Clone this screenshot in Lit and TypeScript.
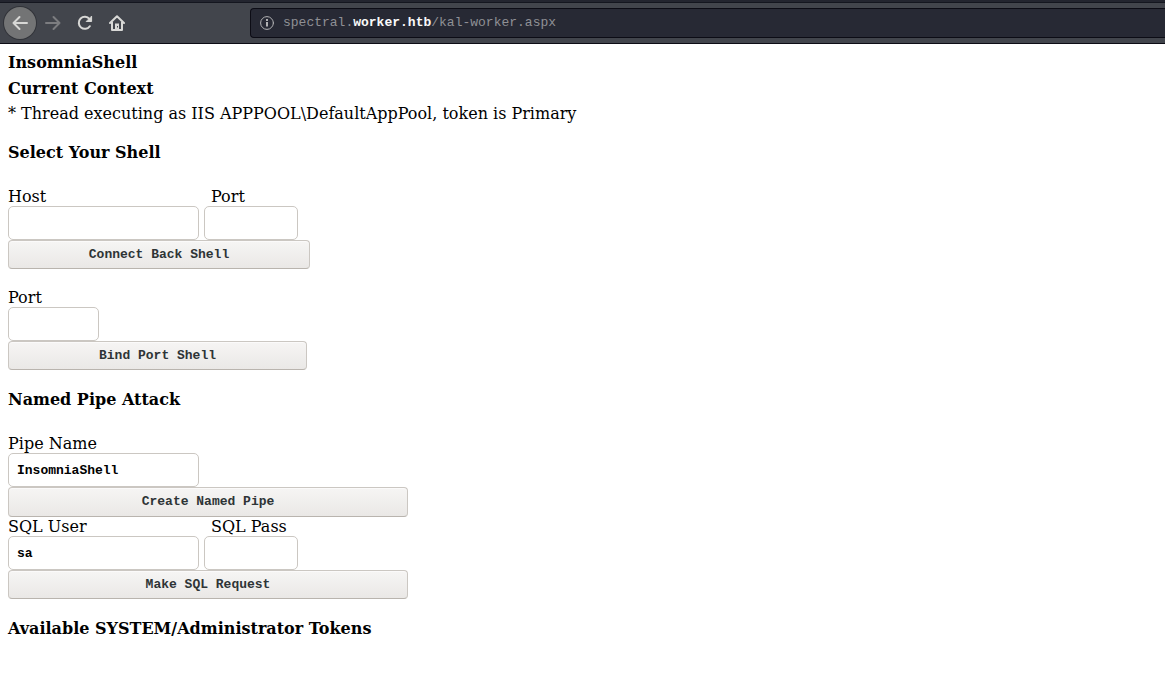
import { LitElement, html, css } from "lit";
import { customElement } from "lit/decorators.js";

@customElement("browser-bar")
class BrowserBar extends LitElement {
  static styles = css`
    :host { display: block; }
    .bar {
      display: flex; align-items: center; box-sizing: border-box; height: 44px;
      padding: 1px 0 0 4px; background: #42454c;
      border-top: 2px solid #23252f; border-bottom: 1px solid #0c0c15;
      box-shadow: inset 0 1px #14161f;
    }
    .nav { display: flex; align-items: center; }
    button {
      display: grid; place-items: center; box-sizing: border-box; width: 32px; height: 32px;
      padding: 0; border: 0; border-radius: 50%; background: none; color: #d8d8d6;
    }
    .back { margin-right: 1px; background: #737475; box-shadow: 0 0 0 1px #313339; }
    button:disabled { color: #7c7d80; }
    svg { display: block; fill: none; stroke: currentColor; stroke-width: 2; stroke-linecap: round; stroke-linejoin: round; }
    .address {
      display: flex; align-items: center; gap: 9px; flex: 1; box-sizing: border-box; height: 30px;
      margin-left: 117px; padding-left: 9px; background: #272934; color: #8f9095;
      border: 1px solid #0c0c15; border-right: 0; border-radius: 4px 0 0 4px;
    }
    .info { stroke: #b1b1b3; stroke-width: 1; }
    .url { font: 13px/18px "Liberation Mono", monospace; color: inherit; text-decoration: none; white-space: nowrap; }
    .domain { color: #f9f9fa; font-weight: 700; }
  `;
  render() {
    return html`<header class="bar">
      <nav class="nav">
        <button class="back" aria-label="Back"><svg width="16" height="16" viewBox="0 0 16 16"><path d="M15 8H1.5M7.5 2L1.5 8L7.5 14" /></svg></button>
        <button disabled aria-label="Forward"><svg width="16" height="16" viewBox="0 0 16 16"><path d="M1 8H14.5M8.5 2L14.5 8L8.5 14" /></svg></button>
        <button aria-label="Reload"><svg width="16" height="16" viewBox="0 0 16 16"><path d="M12.8 11.2A6 6 0 1 1 12.5 4.1" /><path d="M14.6 1.5V6.5H9.6Z" fill="currentColor" stroke-width="1" /></svg></button>
        <button aria-label="Home"><svg width="16" height="16" viewBox="0 0 16 16"><path d="M1 8L8 1.2L15 8M3 7V15H13V7" /><path d="M8 8.5V14" stroke-width="4" stroke-linecap="butt" /><path d="M8.5 11V12.5" stroke="#42454c" stroke-width="1" stroke-linecap="butt" /></svg></button>
      </nav>
      <div class="address">
        <svg class="info" width="14" height="14" viewBox="0 0 14 14"><circle cx="7" cy="7" r="6.4" /><path d="M7 6V10.5M7 3V5" stroke-width="2" stroke-linecap="butt" /></svg>
        <a class="url" href="#">spectral.<span class="domain">worker.htb</span>/kal-worker.aspx</a>
      </div>
    </header>`;
  }
}

@customElement("app-root")
class AppRoot extends LitElement {
  static styles = css`
    :host { display: block; min-height: 100vh; background: #fff; color: #000; font: 16px/19px "DejaVu Serif", serif; }
    main { padding: 9px 8px 20px; }
    h1, h2, p { margin: 0; font-size: 16px; line-height: 19px; }
    h1 { margin-bottom: 7px; }
    p { margin-top: 6px; }
    .section { margin: 20px 0 25px; }
    .form { display: grid; justify-content: start; }
    .form + .form { margin-top: 19px; }
    .pair { display: flex; gap: 5px; }
    .field { display: flex; flex-direction: column; }
    .field + .field label { padding-left: 7px; }
    input {
      box-sizing: border-box; width: 191px; height: 34px; padding: 0 8px; margin: 0;
      border: 1px solid #cbc7c2; border-radius: 5px; background: #fff; color: #000;
      font: bold 13px/18px "Liberation Mono", monospace;
    }
    .short { width: 94px; }
    .small { width: 91px; }
    button {
      box-sizing: border-box; height: 29px; padding: 0 8px; width: 302px;
      border: 1px solid #cbc7c2; border-bottom-color: #b9b4ae; border-radius: 4px;
      background: linear-gradient(#f6f5f4, #eae8e6); box-shadow: inset 0 1px #fbfafa; color: #2e3436;
      font: bold 13px/18px "Liberation Mono", monospace;
    }
    .bind { width: 299px; }
    .wide { width: 400px; }
    .pipe { height: 30px; }
  `;
  render() {
    return html`
      <browser-bar></browser-bar>
      <main>
        <h1>InsomniaShell</h1>
        <h2>Current Context</h2>
        <p>* Thread executing as IIS APPPOOL\\DefaultAppPool, token is Primary</p>
        <h2 class="section">Select Your Shell</h2>
        <div class="form">
          <div class="pair">
            <div class="field"><label for="host">Host</label><input id="host" type="text" /></div>
            <div class="field"><label for="port">Port</label><input id="port" class="short" type="text" /></div>
          </div>
          <button>Connect Back Shell</button>
        </div>
        <div class="form">
          <div class="field"><label for="bind">Port</label><input id="bind" class="small" type="text" /></div>
          <button class="bind">Bind Port Shell</button>
        </div>
        <h2 class="section">Named Pipe Attack</h2>
        <div class="form">
          <div class="field"><label for="pipe">Pipe Name</label><input id="pipe" type="text" value="InsomniaShell" /></div>
          <button class="wide pipe">Create Named Pipe</button>
          <div class="pair">
            <div class="field"><label for="user">SQL User</label><input id="user" type="text" value="sa" /></div>
            <div class="field"><label for="pass">SQL Pass</label><input id="pass" class="short" type="text" /></div>
          </div>
          <button class="wide">Make SQL Request</button>
        </div>
        <h2 class="section">Available SYSTEM/Administrator Tokens</h2>
      </main>`;
  }
}
